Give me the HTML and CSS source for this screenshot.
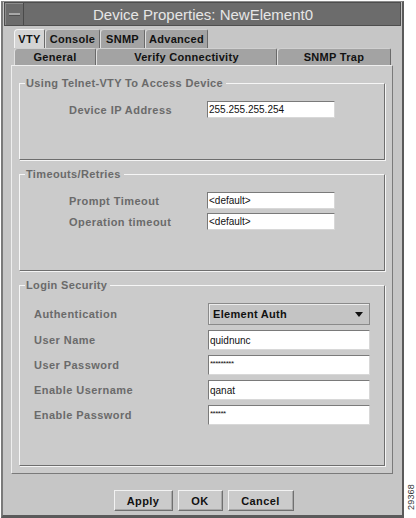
FILE: index.html
```html
<!DOCTYPE html>
<html lang="en">
<head>
    <meta charset="UTF-8">
    <title>Device Properties: NewElement0</title>
    <link rel="stylesheet" href="styles.css">
</head>
<body>
    <div class="window">
        <div class="titlebar">
            <span class="menuBtn"><span class="dash"></span></span>
            <span class="title">Device Properties: NewElement0</span>
        </div>

        <div class="tabs">
            <div class="tabRow">
                <div class="tab selected w-vty">VTY</div>
                <div class="tab w-console">Console</div>
                <div class="tab w-snmp">SNMP</div>
                <div class="tab w-adv">Advanced</div>
            </div>
            <div class="tabRow">
                <div class="tab w-general">General</div>
                <div class="tab w-verify">Verify Connectivity</div>
                <div class="tab w-trap">SNMP Trap</div>
            </div>
        </div>

        <div class="panel">
            <fieldset class="group g-telnet">
                <legend>Using Telnet-VTY To Access Device</legend>
                <div class="rows wide">
                    <label>Device IP Address</label>
                    <div class="field short">255.255.255.254</div>
                </div>
            </fieldset>

            <fieldset class="group g-timeouts">
                <legend>Timeouts/Retries</legend>
                <div class="rows wide">
                    <label>Prompt Timeout</label>
                    <div class="field short">&lt;default&gt;</div>
                    <label>Operation timeout</label>
                    <div class="field short">&lt;default&gt;</div>
                </div>
            </fieldset>

            <fieldset class="group g-login">
                <legend>Login Security</legend>
                <div class="rows narrow">
                    <label>Authentication</label>
                    <div class="combo">
                        <span>Element Auth</span>
                        <span class="arrow"></span>
                    </div>
                    <label>User Name</label>
                    <div class="field">quidnunc</div>
                    <label>User Password</label>
                    <div class="field pw">*********</div>
                    <label>Enable Username</label>
                    <div class="field">qanat</div>
                    <label>Enable Password</label>
                    <div class="field pw">******</div>
                </div>
            </fieldset>
        </div>

        <div class="buttons">
            <button class="w-apply">Apply</button>
            <button class="w-ok">OK</button>
            <button class="w-cancel">Cancel</button>
        </div>
    </div>
    <div class="figNum">29368</div>
</body>
</html>
```

FILE: styles.css
```css
body {
    margin: 0;
    width: 416px;
    height: 518px;
    display: flex;
    background: #ffffff;
    font-family: "Liberation Sans", Arial, sans-serif;
    overflow: hidden;
}
.window {
    margin: 1px 0 0 1px;
    width: 401px;
    height: 513px;
    background: #c6c6c6;
    border: 2px solid #5a5a5a;
    border-top: 1px solid #8a8a8a;
    border-left-color: #7a7a7a;
    border-bottom-width: 3px;
    display: flex;
    flex-direction: column;
}
.titlebar {
    height: 22px;
    margin: 0 1px;
    background: #6c6c6c;
    border: 1px solid #4e4e4e;
    display: flex;
    align-items: center;
}
.menuBtn {
    width: 18px;
    height: 22px;
    border-right: 1px solid #4a4a4a;
    box-shadow: inset 1px 1px 0 #8c8c8c;
    display: flex;
    align-items: center;
    justify-content: center;
}
.dash {
    width: 11px;
    height: 2px;
    background: #a8a8a8;
    border-bottom: 1px solid #505050;
}
.title {
    flex: 1;
    text-align: center;
    color: #e6e6e6;
    font-size: 15px;
    padding-right: 18px;
}
.tabs {
    margin: 3px 0 0 11px;
}
.tabRow {
    display: flex;
    height: 19px;
}
.tabRow + .tabRow {
    height: 17px;
}
.tab {
    box-sizing: border-box;
    background: #a3a3a3;
    border: 1px solid #6a6a6a;
    border-bottom: none;
    border-left-color: #e0e0e0;
    border-top-color: #d0d0d0;
    border-radius: 4px 2px 0 0;
    font-size: 11px;
    font-weight: bold;
    color: #111;
    display: flex;
    align-items: center;
    justify-content: center;
    letter-spacing: 0.3px;
}
.tab.selected {
    background: #d4d4d4;
    border-left-color: #f4f4f4;
    border-top-color: #f4f4f4;
}
.w-vty { width: 31px; }
.w-console { width: 55px; }
.w-snmp { width: 45px; }
.w-adv { width: 63px; }
.w-general { width: 82px; }
.w-verify { width: 181px; }
.w-trap { width: 114px; }

.panel {
    margin: 0 9px 0 8px;
    height: 409px;
    box-sizing: border-box;
    background: #cbcbcb;
    border: 1px solid #7a7a7a;
    border-left-color: #eeeeee;
    border-top-color: #eeeeee;
    padding: 10px 7px 0 7px;
    display: flex;
    flex-direction: column;
    gap: 7px;
}
.group {
    margin: 0;
    padding: 0;
    box-sizing: border-box;
    border: 1px solid #6e6e6e;
    border-top-color: #f6f6f6;
    border-left-color: #f6f6f6;
    box-shadow: 1px 1px 0 #f4f4f4;
}
.group legend {
    font-size: 11px;
    font-weight: bold;
    color: #6a6a6a;
    padding: 0 3px 0 1px;
    margin-left: 5px;
    letter-spacing: 0.35px;
    line-height: 14px;
}
.g-telnet { height: 84px; }
.g-timeouts { height: 104px; }
.g-login { height: 188px; }

.rows {
    display: grid;
    align-items: center;
    margin-top: 11px;
}
.rows.wide {
    grid-template-columns: 138px 128px;
    padding-left: 49px;
    row-gap: 4px;
}
.rows.narrow {
    grid-template-columns: 174px 162px;
    padding-left: 14px;
    row-gap: 5px;
}
.rows label {
    font-size: 11px;
    font-weight: bold;
    color: #6a6a6a;
    letter-spacing: 0.45px;
}
.field {
    box-sizing: border-box;
    height: 17px;
    background: #ffffff;
    border: 1px solid #7a7a7a;
    border-right-color: #d8d8d8;
    border-bottom-color: #d8d8d8;
    font-size: 10px;
    color: #111;
    padding-left: 1px;
    display: flex;
    align-items: center;
}
.narrow .field {
    height: 20px;
}
.field.pw {
    font-size: 8px;
    letter-spacing: -0.5px;
    align-items: flex-start;
    padding-top: 3px;
}
.combo {
    box-sizing: border-box;
    height: 22px;
    background: #c4c4c4;
    border: 1px solid #8a8a8a;
    box-shadow: inset 1px 1px 0 #ececec;
    display: flex;
    align-items: center;
    justify-content: space-between;
    padding: 0 6px 0 4px;
    font-size: 11px;
    font-weight: bold;
    color: #111;
    letter-spacing: 0.3px;
}
.arrow {
    width: 0;
    height: 0;
    border-left: 4px solid transparent;
    border-right: 4px solid transparent;
    border-top: 5px solid #111;
}

.buttons {
    display: flex;
    justify-content: center;
    gap: 5px;
    margin-top: 16px;
    padding-left: 2px;
}
.buttons button {
    box-sizing: border-box;
    height: 21px;
    background: #cbcbcb;
    border: 1px solid #f2f2f2;
    border-right-color: #707070;
    border-bottom-color: #707070;
    box-shadow: inset -1px -1px 0 #a8a8a8;
    font-family: "Liberation Sans", Arial, sans-serif;
    font-size: 11px;
    font-weight: bold;
    color: #111;
    letter-spacing: 0.4px;
    padding: 0;
}
.w-apply { width: 59px; }
.w-ok { width: 45px; }
.w-cancel { width: 66px; }

.figNum {
    align-self: flex-end;
    margin: 0 0 8px 2px;
    writing-mode: vertical-rl;
    transform: rotate(180deg);
    font-size: 9px;
    color: #333;
    letter-spacing: 0.2px;
}
```
